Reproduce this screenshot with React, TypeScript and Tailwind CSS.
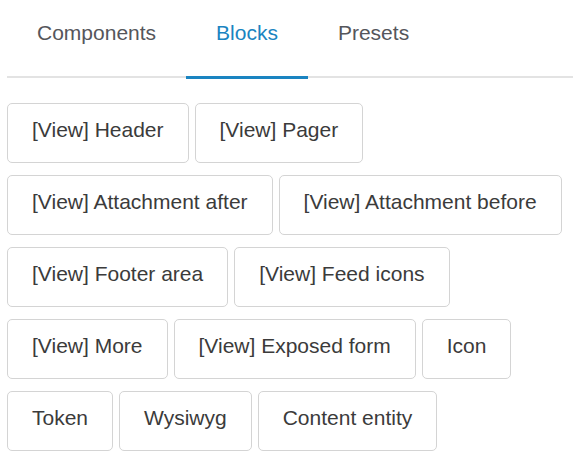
import React from 'react';

const tabs = ['Components', 'Blocks', 'Presets'];

const blocks = [
    '[View] Header',
    '[View] Pager',
    '[View] Attachment after',
    '[View] Attachment before',
    '[View] Footer area',
    '[View] Feed icons',
    '[View] More',
    '[View] Exposed form',
    'Icon',
    'Token',
    'Wysiwyg',
    'Content entity',
];

const App: React.FC = () => {
    return (
        <div className="min-h-screen bg-white pl-[7px] font-['Liberation_Sans',Arial,sans-serif]">
            {/* Tabs */}
            <div className="flex border-b-2 border-[#e3e3e3]">
                {tabs.map((tab) => (
                    <div
                        key={tab}
                        className={
                            tab === 'Blocks'
                                ? 'px-[30px] pt-[21px] pb-[31px] text-[21px] leading-[24px] text-[#1a84c1] border-b-[3px] border-[#1a84c1] -mb-[3px]'
                                : 'px-[30px] pt-[21px] pb-[31px] text-[21px] leading-[24px] text-[#55565b]'
                        }
                    >
                        {tab}
                    </div>
                ))}
            </div>

            {/* Block buttons */}
            <div className="mt-[25px] flex flex-wrap gap-x-[6px] gap-y-[12px]">
                {blocks.map((label) => (
                    <button
                        key={label}
                        className="rounded-[5px] border border-[#d4d4d4] bg-white px-[24px] pt-[14px] pb-[20px] text-[21px] leading-[24px] text-[#3b3b3b] whitespace-nowrap"
                    >
                        {label}
                    </button>
                ))}
            </div>
        </div>
    );
};

export default App;
